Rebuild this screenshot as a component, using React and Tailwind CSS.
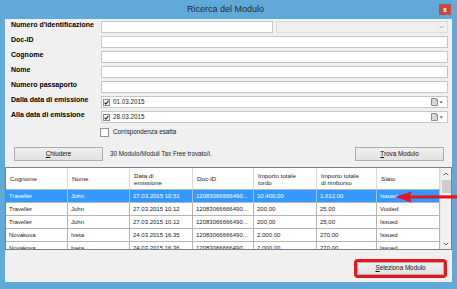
import React from "react";

const rows = [
  ["Traveller", "John", "27.03.2015 10.51", "12083066666490...", "10.400,00", "1.612,00", "Issued"],
  ["Traveller", "John", "27.03.2015 10.12", "12083066666490...", "200,00", "25,00", "Voided"],
  ["Traveller", "John", "27.03.2015 10.12", "12083066666490...", "200,00", "25,00", "Issued"],
  ["Novakova", "Iveta", "24.03.2015 16.35", "12083066666490...", "2.000,00", "270,00", "Issued"],
  ["Novakova", "Iveta", "24.03.2015 16.36", "12083066666490...", "2.000,00", "270,00", "Issued"],
];

const headers = [
  ["Cognome"],
  ["Nome"],
  ["Data di", "emissione"],
  ["Doc-ID"],
  ["Importo totale", "lordo"],
  ["Importo totale", "di rimborso"],
  ["Stato"],
];

const colCls = "grid grid-cols-[62px_62px_63px_61px_63px_60px_63px]";

function Row({ label, children }) {
  return (
    <div className="flex h-[12px] items-start">
      <div className="w-[96px] pl-[6px] text-[7px] font-bold leading-[7px] whitespace-nowrap text-black">
        {label}
      </div>
      <div className="flex flex-1 h-full gap-[3px]">{children}</div>
    </div>
  );
}

function TextBox({ className = "" }) {
  return <div className={"h-full bg-white border border-[#c6c6c6] " + className} />;
}

function Check({ size = 7 }) {
  return (
    <svg width={size} height={size} viewBox="0 0 8 8" className="shrink-0">
      <rect x="0.5" y="0.5" width="7" height="7" fill="#fff" stroke="#7a7a7a" />
      <path d="M1.8 4.2 L3.3 5.8 L6.3 2" fill="none" stroke="#1f1f1f" strokeWidth="1.3" />
    </svg>
  );
}

function DateBox({ value }) {
  return (
    <div className="h-full flex-1 bg-white border border-[#c6c6c6] flex items-center pl-[1px] pr-[3px]">
      <Check />
      <span className="ml-[3px] text-[6.3px] leading-none text-[#222]">{value}</span>
      <div className="flex-1" />
      <svg width="13" height="8" viewBox="0 0 13 8">
        <path d="M0.5 0.5 H5 L6.5 2 V7.5 H0.5 Z" fill="#d9d9d9" stroke="#8a8a8a" />
        <path d="M5 0.5 V2 H6.5" fill="none" stroke="#8a8a8a" />
        <path d="M8.5 3.5 H12 L10.25 5.3 Z" fill="#34496e" />
      </svg>
    </div>
  );
}

function Btn({ children, className = "" }) {
  return (
    <div
      className={
        "h-full flex items-center justify-center bg-gradient-to-b from-[#f0f0f0] to-[#e2e2e2] border border-[#adadad] text-[6.3px] leading-none text-[#111] " +
        className
      }
    >
      {children}
    </div>
  );
}

export default function App() {
  return (
    <div className="relative w-[457px] h-[289px] overflow-hidden bg-[#60aad9] flex flex-col font-['Liberation_Sans',Arial,sans-serif]">
      {/* Title bar */}
      <div className="h-[19px] flex shrink-0">
        <div className="flex-1" />
        <div className="flex items-center text-[9px] leading-none text-[#1d2a36] pb-[1px]">
          Ricerca del Modulo
        </div>
        <div className="flex-1 flex justify-end items-start pt-[4px] pr-[6px]">
          <div className="w-[12px] h-[11px] bg-[#c9483f] flex items-center justify-center text-white text-[7px] font-bold leading-none">
            x
          </div>
        </div>
      </div>

      {/* Client area */}
      <div className="mx-[5px] h-[263px] bg-[#f0f0f0] flex flex-col">
        <div className="flex flex-col gap-[3px] pt-[2px] pr-[4px]">
          <Row label="Numero d'identificazione">
            <TextBox className="w-[172px]" />
            <div className="h-full flex-1 bg-[#efefef] border border-[#dcdcdc] flex items-center justify-end pr-[3px]">
              <svg width="5" height="4" viewBox="0 0 5 4">
                <path d="M0.5 0.8 L2.5 3 L4.5 0.8" fill="none" stroke="#a0a0a0" strokeWidth="0.9" />
              </svg>
            </div>
          </Row>
          <Row label="Doc-ID">
            <TextBox className="flex-1" />
          </Row>
          <Row label="Cognome">
            <TextBox className="flex-1" />
          </Row>
          <Row label="Nome">
            <TextBox className="flex-1" />
          </Row>
          <Row label="Numero passaporto">
            <TextBox className="flex-1" />
          </Row>
          <Row label="Dalla data di emissione">
            <DateBox value="01.03.2015" />
          </Row>
          <Row label="Alla data di emissione">
            <DateBox value="28.03.2015" />
          </Row>
        </div>

        {/* Checkbox */}
        <div className="mt-[5px] h-[9px] pl-[95px] flex items-center">
          <div className="w-[9px] h-[9px] bg-white border border-[#8f8f8f]" />
          <span className="ml-[4px] text-[6.3px] leading-none text-[#222]">Corrispondenza esatta</span>
        </div>

        {/* Buttons row */}
        <div className="mt-[10px] h-[14px] flex items-center pl-[9px] pr-[8px]">
          <Btn className="w-[89px]">
            <span><span className="underline">C</span>hiudere</span>
          </Btn>
          <span className="ml-[7px] text-[6.3px] leading-none text-[#222]">
            30 Modulo/Moduli Tax Free trovato/i.
          </span>
          <div className="flex-1" />
          <Btn className="w-[89px]">
            <span><span className="underline">T</span>rova Modulo</span>
          </Btn>
        </div>

        {/* Grid */}
        <div className="mt-[6px] h-[83px] shrink-0 border border-[#7d7f84] bg-white flex overflow-hidden">
          <div className="w-[434px] flex flex-col">
            <div className={colCls + " h-[22px] shrink-0 border-b border-[#b4b4b4]"}>
              {headers.map((h, i) => (
                <div
                  key={i}
                  className="border-r border-[#dadada] pl-[4px] flex flex-col justify-center text-[6.2px] leading-[7px] text-[#222]"
                >
                  {h.map((l, j) => (
                    <div key={j} className="whitespace-nowrap">{l}</div>
                  ))}
                </div>
              ))}
            </div>
            {rows.map((r, ri) => (
              <div
                key={ri}
                className={
                  colCls +
                  " h-[13px] shrink-0 border-b border-[#b4b4b4] " +
                  (ri === 0 ? "bg-[#3399ff] text-white" : "text-[#222]")
                }
              >
                {r.map((c, ci) => (
                  <div
                    key={ci}
                    className={
                      "border-r pl-[3px] flex items-center overflow-hidden whitespace-nowrap text-[6px] leading-none " +
                      (ri === 0 ? "border-[#9cc6ef]" : "border-[#b4b4b4]")
                    }
                  >
                    {c}
                  </div>
                ))}
              </div>
            ))}
          </div>
          {/* Scrollbar */}
          <div className="w-[11px] bg-[#f0f0f0] border-l border-[#e6e6e6] flex flex-col items-center">
            <div className="h-[11px] flex items-center justify-center">
              <svg width="6" height="4" viewBox="0 0 6 4">
                <path d="M0.7 3.3 L3 1 L5.3 3.3" fill="none" stroke="#606060" strokeWidth="1" />
              </svg>
            </div>
            <div className="mt-[1px] w-[9px] h-[13px] bg-[#cdcdcd]" />
            <div className="flex-1" />
            <div className="h-[11px] flex items-center justify-center">
              <svg width="6" height="4" viewBox="0 0 6 4">
                <path d="M0.7 0.7 L3 3 L5.3 0.7" fill="none" stroke="#606060" strokeWidth="1" />
              </svg>
            </div>
          </div>
        </div>

        {/* Bottom */}
        <div className="flex-1 flex justify-end items-start pt-[9px] pr-[5px]">
          <div className="w-[93px] h-[19px] border-[3px] border-[#e5161c] rounded-[4px]">
            <Btn className="w-full">
              <span><span className="underline">S</span>eleziona Modulo</span>
            </Btn>
          </div>
        </div>
      </div>

      {/* Red arrow annotation */}
      <svg
        className="absolute left-[395px] top-[190px]"
        width="62"
        height="14"
        viewBox="0 0 62 14"
      >
        <path d="M0 7 L17 1.5 L15 5.6 L62 5.2 L62 8.6 L15 8.4 L17 12.5 Z" fill="#e3161d" />
      </svg>
    </div>
  );
}
